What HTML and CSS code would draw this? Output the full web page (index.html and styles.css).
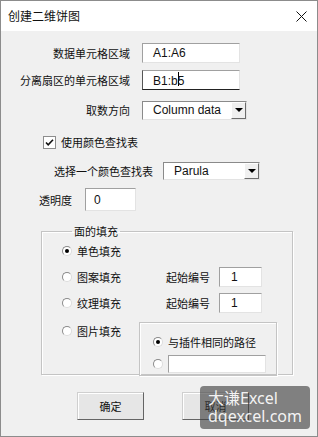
FILE: index.html
```html
<!DOCTYPE html>
<html lang="zh-CN">
<head>
    <meta charset="UTF-8">
    <title>创建二维饼图</title>
    <link rel="stylesheet" href="styles.css">
</head>
<body>

<div class="dialog">
    <div class="titlebar">
        <span class="title">创建二维饼图</span>
        <svg class="close" width="11" height="11" viewBox="0 0 11 11">
            <path d="M0.5 0.5 L10.5 10.5 M10.5 0.5 L0.5 10.5" stroke="#111" stroke-width="1" fill="none"/>
        </svg>
    </div>

    <div class="content">
        <div class="field-row row-data">
            <label class="label">数据单元格区域</label>
            <div class="textbox wide"><span class="val">A1:A6</span></div>
        </div>
        <div class="field-row row-split">
            <label class="label">分离扇区的单元格区域</label>
            <div class="textbox wide focused"><span class="val">B1:b<span class="caret"></span>5</span></div>
        </div>
        <div class="field-row row-dir">
            <label class="label">取数方向</label>
            <div class="combo dir-combo">
                <span class="val">Column data</span>
                <span class="combo-btn"><i class="tri"></i></span>
            </div>
        </div>

        <div class="check-row">
            <svg class="checkbox" width="13" height="13" viewBox="0 0 13 13">
                <rect x="0.5" y="0.5" width="12" height="12" fill="#fff" stroke="#8d8d8d"/>
                <path d="M3 6.5 L5.2 8.8 L10 3.8" stroke="#111" stroke-width="1.6" fill="none"/>
            </svg>
            <span>使用颜色查找表</span>
        </div>

        <div class="lut-row">
            <label class="label">选择一个颜色查找表</label>
            <div class="combo lut-combo">
                <span class="val">Parula</span>
                <span class="combo-btn"><i class="tri"></i></span>
            </div>
        </div>

        <div class="alpha-row">
            <label class="label">透明度</label>
            <div class="textbox alpha"><span class="val">0</span></div>
        </div>

        <fieldset class="group fill-group">
            <legend>面的填充</legend>
            <div class="fill-row">
                <span class="radio on"></span><span>单色填充</span>
            </div>
            <div class="fill-row">
                <span class="radio"></span><span class="opt">图案填充</span>
                <span class="start-label">起始编号</span>
                <div class="textbox num"><span class="val">1</span></div>
            </div>
            <div class="fill-row">
                <span class="radio"></span><span class="opt">纹理填充</span>
                <span class="start-label">起始编号</span>
                <div class="textbox num"><span class="val">1</span></div>
            </div>
            <div class="pic-row">
                <div class="pic-opt">
                    <span class="radio"></span><span>图片填充</span>
                </div>
                <div class="group path-group">
                    <div class="path-row">
                        <span class="radio on"></span><span>与插件相同的路径</span>
                    </div>
                    <div class="path-row">
                        <span class="radio"></span>
                        <div class="textbox path"></div>
                    </div>
                </div>
            </div>
        </fieldset>

        <div class="buttons">
            <button class="btn">确定</button>
            <button class="btn">取消</button>
        </div>
    </div>

    <div class="watermark">
        <div>大谦Excel</div>
        <div>dqexcel.com</div>
    </div>
</div>

</body>
</html>
```

FILE: styles.css
```css
* {
    box-sizing: border-box;
}

body {
    margin: 0;
    background: #f0f0f0;
    font-family: "Noto Sans CJK SC", sans-serif;
}

.dialog {
    position: relative;
    width: 318px;
    height: 437px;
    border: 1px solid #8c8c8c;
    background: #f0f0f0;
    font-size: 11px;
    line-height: 16px;
    color: #111;
    overflow: hidden;
}

.titlebar {
    height: 30px;
    background: #fff;
    display: flex;
    align-items: center;
    justify-content: space-between;
    padding: 0 10px 0 7px;
}

.titlebar .title {
    font-size: 12px;
}

.val {
    font-family: "Liberation Sans", sans-serif;
    font-size: 12px;
    position: relative;
}

.caret {
    display: inline-block;
    width: 1px;
    height: 14px;
    background: #000;
    vertical-align: -1px;
    margin: 0 -1px 0 0;
}

.label {
    display: block;
    text-align: right;
}

.field-row {
    display: flex;
    align-items: center;
    height: 20px;
}

.field-row .label {
    width: 129px;
    margin-right: 12px;
}

.row-data {
    margin-top: 12px;
}

.row-split {
    margin-top: 7px;
}

.row-dir {
    margin-top: 10px;
}

.textbox {
    height: 20px;
    background: #fff;
    border: 1px solid;
    border-color: #a0a0a0 #e3e3e3 #e3e3e3 #a0a0a0;
    display: flex;
    align-items: center;
    padding-left: 10px;
}

.textbox.wide {
    width: 98px;
}

.textbox.focused {
    border-bottom-color: #222;
    border-left-color: #555;
}

.combo {
    height: 19px;
    background: #fff;
    border: 1px solid;
    border-color: #8a8a8a #e3e3e3 #e3e3e3 #8a8a8a;
    display: flex;
    align-items: center;
    justify-content: space-between;
    padding-left: 10px;
}

.dir-combo {
    width: 105px;
}

.combo-btn {
    width: 15px;
    height: 17px;
    background: #f0f0f0;
    border: 1px solid;
    border-color: #fff #6d6d6d #6d6d6d #fff;
    display: flex;
    align-items: center;
    justify-content: center;
}

.tri {
    width: 0;
    height: 0;
    border-left: 4px solid transparent;
    border-right: 4px solid transparent;
    border-top: 4px solid #000;
}

.check-row {
    display: flex;
    align-items: center;
    height: 16px;
    margin-top: 14px;
    padding-left: 42px;
}

.checkbox {
    margin-right: 5px;
}

.lut-row {
    display: flex;
    align-items: center;
    height: 18px;
    margin-top: 12px;
    padding-left: 53px;
}

.lut-row .label {
    margin-right: 10px;
}

.lut-combo {
    width: 97px;
    height: 18px;
}

.lut-combo .combo-btn {
    height: 16px;
}

.alpha-row {
    display: flex;
    align-items: center;
    height: 23px;
    margin-top: 8px;
    padding-left: 38px;
}

.alpha-row .label {
    margin-right: 13px;
}

.textbox.alpha {
    width: 51px;
    height: 23px;
    padding-left: 8px;
}

.group {
    border: 1px solid #c4c4c4;
    box-shadow: 1px 1px 0 #fff, inset 1px 1px 0 #fff;
}

.fill-group {
    margin: 13px 0 0 40px;
    width: 252px;
    height: 151px;
    padding: 0 0 0 20px;
}

.fill-group legend {
    margin-left: 10px;
    padding: 0 2px;
    line-height: 14px;
}

.fill-row {
    display: flex;
    align-items: center;
    height: 20px;
    margin-top: 6px;
}

.fill-row:first-of-type {
    margin-top: 3px;
}

.radio {
    width: 10px;
    height: 10px;
    border-radius: 50%;
    background: #fff;
    border: 1px solid;
    border-color: #8a8a8a #dcdcdc #dcdcdc #8a8a8a;
    margin-right: 5px;
    position: relative;
    flex-shrink: 0;
}

.radio.on::after {
    content: "";
    position: absolute;
    left: 2px;
    top: 2px;
    width: 4px;
    height: 4px;
    border-radius: 50%;
    background: #000;
}

.opt {
    width: 89px;
}

.start-label {
    margin-right: 9px;
}

.textbox.num {
    width: 43px;
    padding-left: 11px;
}

.pic-row {
    display: flex;
    margin-top: 9px;
}

.pic-opt {
    display: flex;
    align-items: center;
    height: 16px;
    margin-top: 1px;
    width: 77px;
}

.path-group {
    width: 138px;
    height: 54px;
    padding: 11px 0 0 13px;
}

.path-row {
    display: flex;
    align-items: center;
    height: 16px;
}

.path-row + .path-row {
    margin-top: 5px;
    height: 18px;
}

.textbox.path {
    width: 98px;
    height: 18px;
}

.buttons {
    display: flex;
    margin-top: 17px;
    padding-left: 76px;
}

.btn {
    width: 67px;
    height: 28px;
    margin-right: 38px;
    background: #e6e6e6;
    border: 1px solid;
    border-color: #cfcfcf #646464 #646464 #cfcfcf;
    box-shadow: inset 1px 1px 0 #fff;
    font-family: "Noto Sans CJK SC", sans-serif;
    font-size: 11px;
    color: #111;
    padding: 0;
}

.watermark {
    position: absolute;
    left: 199px;
    top: 385px;
    width: 110px;
    height: 43px;
    border-radius: 4px;
    background: rgba(60, 60, 60, .62);
    color: rgba(255, 255, 255, .92);
    font-family: "Noto Sans", "Noto Sans CJK SC", sans-serif;
    font-size: 16px;
    line-height: 18px;
    padding: 3px 0 0 8px;
}
```
